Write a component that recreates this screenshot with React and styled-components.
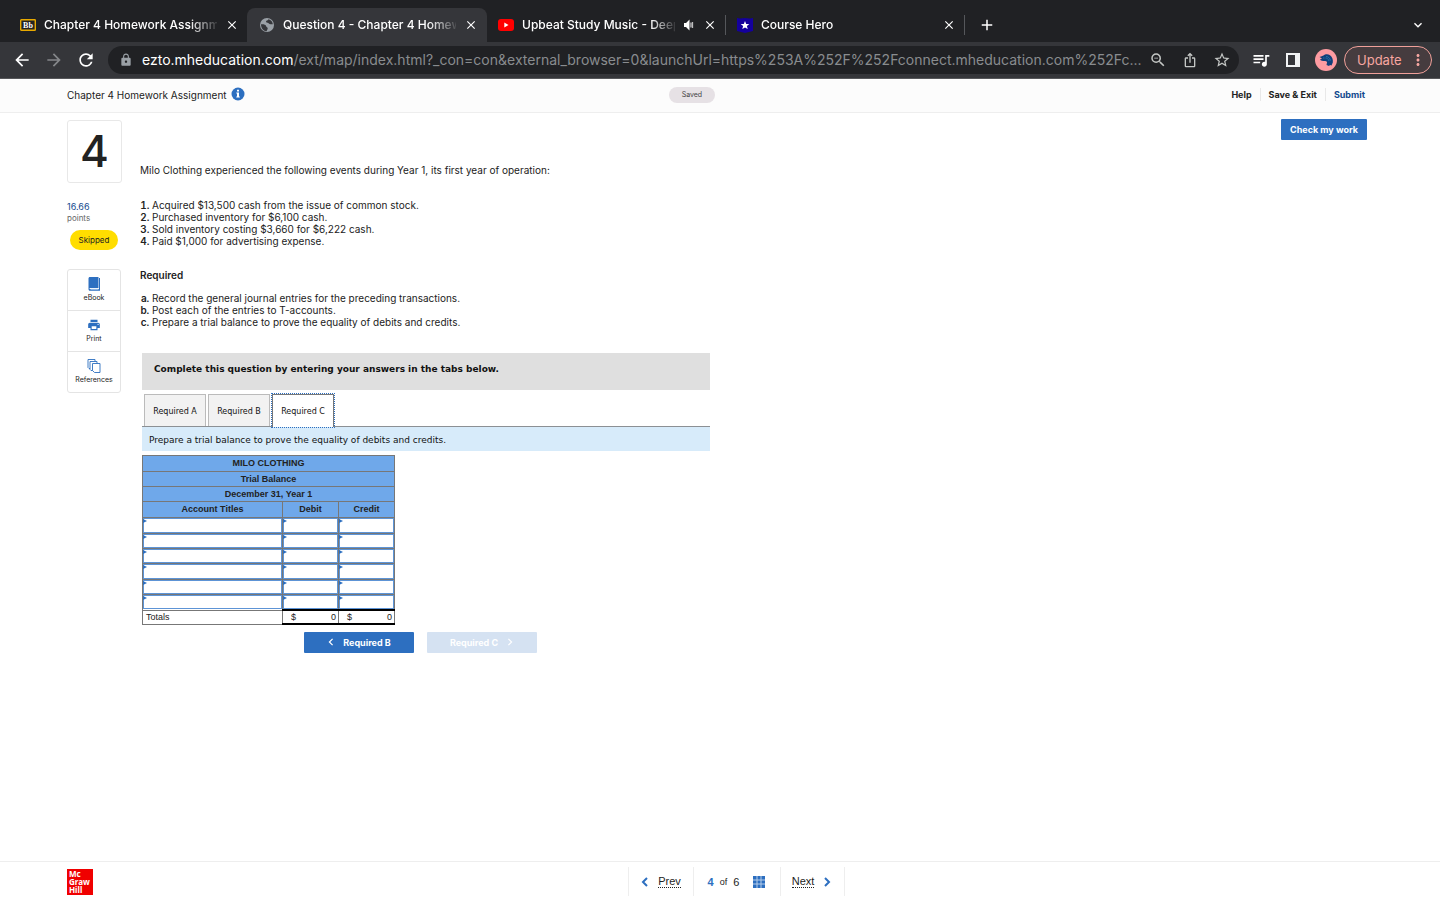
import React, { useState } from 'react'
import styled, { createGlobalStyle, css } from 'styled-components'
import { MdArrowBack, MdArrowForward, MdRefresh, MdLock, MdStarOutline, MdClose, MdAdd, MdExpandMore, MdOutlineZoomOut, MdOutlineIosShare, MdMoreVert, MdPrint, MdQueueMusic } from 'react-icons/md'

const GlobalStyle = createGlobalStyle`
  * {
    box-sizing: border-box;
  }
  body {
    margin: 0;
    background: #fff;
    color: #222;
    font-family: Inter, "Liberation Sans", sans-serif;
    font-size: 10px;
  }
  button, input {
    font: inherit;
    color: inherit;
  }
  button {
    border: 0;
    padding: 0;
    background: none;
    cursor: pointer;
  }
  a {
    color: inherit;
    text-decoration: none;
  }
`;

const Page = styled.div`
  min-height: 100vh;
  display: flex;
  flex-direction: column;
`;

/* browser chrome */
const TabStrip = styled.div`
  display: flex;
  align-items: flex-end;
  height: 42px;
  padding: 0 16px 0 8px;
  background: #202124;
  color: #fff;
`;

const BrowserTab = styled.div`
  display: flex;
  align-items: center;
  gap: 8px;
  width: 240px;
  height: 34px;
  margin-right: -1px;
  padding: 0 9px 0 12px;
  border-radius: 8px 8px 0 0;
  background: ${(p) => (p.$active ? "#35363a" : "transparent")};
`;

const TabTitle = styled.span`
  flex: 1;
  min-width: 0;
  overflow: hidden;
  white-space: nowrap;
  font-size: 12px;
  font-weight: 500;
  line-height: 18px;
  mask-image: linear-gradient(to right, #000 84%, transparent 102%);
`;

const ChromeButton = styled.button`
  display: flex;
  align-items: center;
  justify-content: center;
  flex: none;
  width: ${(p) => p.$size || 14}px;
  height: ${(p) => p.$size || 14}px;
  color: ${(p) => p.$color || "#fff"};
`;

const Divider = styled.span`
  flex: none;
  width: 1px;
  height: 20px;
  margin: 0 -1px 7px 0;
  background: #55575b;
`;

const NewTab = styled(ChromeButton)`
  margin: 0 0 8px 14px;
`;

const TabSearch = styled(ChromeButton)`
  margin: 0 -2px 9px auto;
`;

const Toolbar = styled.div`
  display: flex;
  align-items: center;
  height: 37px;
  padding: 0 8px 0 12px;
  border-bottom: 1px solid #56575a;
  background: #35363a;
`;

const NavButtons = styled.div`
  display: flex;
  gap: 12px;
  margin-right: 12px;
`;

const AddressBar = styled.div`
  display: flex;
  align-items: center;
  flex: 1;
  min-width: 0;
  height: 28px;
  padding: 0 8px 0 11px;
  border-radius: 14px;
  background: #202124;
  color: #9aa0a6;
`;

const Url = styled.span`
  flex: 1;
  min-width: 0;
  margin: 0 6px 0 9px;
  overflow: hidden;
  text-overflow: ellipsis;
  white-space: nowrap;
  font-size: 14px;
  line-height: 20px;
  color: #898c8f;
  b {
    font-weight: 400;
    color: #fff;
  }
`;

const BarIcons = styled.div`
  display: flex;
  align-items: center;
  gap: ${(p) => p.$gap}px;
`;

const Extensions = styled(BarIcons)`
  margin: 0 7px 0 12px;
`;

const UpdateButton = styled.button`
  display: flex;
  align-items: center;
  justify-content: space-between;
  width: 88px;
  height: 28px;
  padding: 0 4px 0 12px;
  border: 1px solid #f0a09a;
  border-radius: 14px;
  background: #463c3f;
  color: #f7a6a1;
  font-size: 13px;
`;

/* assignment header */
const Header = styled.header`
  display: grid;
  grid-template-columns: 12fr auto 13fr;
  align-items: center;
  height: 34px;
  padding: 0 73px 2px 67px;
  border-bottom: 1px solid #eee;
  background: #fcfcfc;
`;

const Title = styled.h1`
  display: flex;
  align-items: center;
  gap: 4px;
  margin: 0;
  font-size: 10px;
  font-weight: 400;
  line-height: 14px;
  svg {
    margin-bottom: 1px;
  }
`;

const Saved = styled.span`
  width: 46px;
  border-radius: 8px;
  background: #e6e1e5;
  color: #444;
  font-size: 7px;
  line-height: 16px;
  text-align: center;
`;

const HeaderLinks = styled.nav`
  display: flex;
  justify-content: flex-end;
  padding-right: 2px;
  font-size: 9px;
  font-weight: 700;
  line-height: 13px;
  a + a {
    margin-left: 8px;
    padding-left: 8px;
    border-left: 1px solid #e8e8e8;
  }
  a:last-child {
    color: #134a8e;
  }
`;

const Main = styled.main`
  display: flex;
  align-items: flex-start;
  flex: 1;
  padding: 6px 73px 24px 67px;
`;

const Side = styled.aside`
  flex: none;
  width: 55px;
  margin: 1px 18px 0 0;
`;

const QuestionNumber = styled.div`
  height: 63px;
  border: 1px solid #e8e8e8;
  border-radius: 3px;
  font-size: 44px;
  font-weight: 500;
  line-height: 61px;
  text-align: center;
`;

const Points = styled.div`
  margin: 18px 0 6px;
  color: #666;
  font-size: 8px;
  line-height: 11px;
  strong {
    display: block;
    color: #134a8e;
    font-size: 9px;
    font-weight: 400;
    line-height: 12px;
  }
`;

const Skipped = styled.div`
  width: 48px;
  margin: 0 auto 19px 3px;
  border-radius: 10px;
  background: #ffdd00;
  font-size: 8px;
  line-height: 20px;
  text-align: center;
`;

const Tools = styled.div`
  width: 54px;
  border: 1px solid #e4e4e4;
  border-radius: 3px;
`;

const Tool = styled.button`
  display: flex;
  flex-direction: column;
  align-items: center;
  gap: 1px;
  width: 100%;
  height: 41px;
  padding-top: 7px;
  font-size: 7px;
  line-height: 11px;
  svg {
    color: #2d6fc0;
  }
  &:first-child {
    height: 40px;
  }
  & + & {
    border-top: 1px solid #e4e4e4;
  }
`;

const Question = styled.section`
  flex: 1;
  min-width: 0;
  padding-top: 44px;
`;

const Text = styled.p`
  margin: 0;
  font-weight: ${(p) => (p.$bold ? 600 : 400)};
  line-height: 14px;
`;

const Steps = styled.ol`
  margin: ${(p) => p.$margin};
  padding-left: 12px;
  list-style: ${(p) => p.$kind};
  line-height: 12px;
  li::marker {
    font-weight: 600;
  }
`;

const Worksheet = styled.div`
  max-width: 568px;
  margin-left: 2px;
  color: #111;
  font-family: "DejaVu Sans", sans-serif;
  font-size: 9px;
`;

const Banner = styled.div`
  height: 37px;
  padding: 9px 12px;
  background: #dfdfdf;
  font-weight: 700;
  line-height: 14px;
`;

const TabList = styled.div`
  display: flex;
  gap: 2px;
  height: 37px;
  padding: 4px 2px 0;
  border-bottom: 1px solid #8c9094;
`;

const SheetTab = styled.button`
  width: 62px;
  padding-top: 2px;
  border: 1px solid #bbb;
  border-bottom: 0;
  background: #f2f2f2;
  font-size: 8px;
  ${(p) => p.$active && css`
    height: 33px;
    padding-top: 1px;
    border-color: #777;
    background: #fff;
    outline: 1px dotted #2d6fc0;
  `}
`;

const Prompt = styled.div`
  padding: 6px 7px 4px;
  background: #d7ebfa;
  line-height: 14px;
`;

const Sheet = styled.table`
  width: 253px;
  margin-top: 4px;
  border-collapse: collapse;
  table-layout: fixed;
  color: #222;
  font-family: "Liberation Sans", Arial, sans-serif;
  font-size: 9px;
  line-height: 12px;
  th, td {
    height: 15px;
    padding: 0;
    border: 1px solid #777;
  }
  tr:nth-child(3n + 1) > * {
    height: 16px;
  }
  tr:nth-child(3n + 1) input {
    height: 15px;
  }
  th {
    padding-bottom: 1px;
    background: #6fa8ea;
  }
  tr:last-child > td {
    height: 14px;
    line-height: 11px;
  }
`;

const InputCell = styled.td`
  position: relative;
  &::before {
    content: "";
    position: absolute;
    top: 1px;
    left: 0;
    border: 2px solid transparent;
    border-left: 4px solid #2d6fc0;
    border-right: 0;
  }
`;

const CellInput = styled.input`
  display: block;
  width: 100%;
  height: 14px;
  padding: 0 4px;
  border: 1px solid #5d94d6;
  border-radius: 0;
  background: #fff;
  outline: 0;
`;

const TotalLabel = styled.td`
  && {
    padding-left: 3px;
  }
`;

const Total = styled.td`
  && {
    border-top: 2px solid #000;
    border-bottom: 2px solid #000;
  }
  div {
    display: flex;
    justify-content: space-between;
    padding: 0 2px 0 8px;
  }
`;

const StepButtons = styled.div`
  display: flex;
  gap: 13px;
  margin: 7px 0 0 162px;
`;

const Button = styled.button`
  display: flex;
  align-items: center;
  justify-content: center;
  gap: 8px;
  width: ${(p) => p.$width}px;
  height: 21px;
  padding-bottom: 1px;
  border-radius: 1px;
  background: #2d6fc0;
  color: #fff;
  font-family: Inter, sans-serif;
  font-size: 9px;
  font-weight: 700;
  &:disabled {
    background: #d5e2f2;
    cursor: default;
  }
`;

/* pager */
const Footer = styled.footer`
  display: flex;
  align-items: center;
  height: 39px;
  padding: 0 60px 0 67px;
  border-top: 1px solid #eee;
`;

const Logo = styled.div`
  flex: none;
  display: flex;
  flex-direction: column;
  width: 26px;
  height: 26px;
  margin-top: 1px;
  padding: 1px 2px;
  background: #f00000;
  color: #fff;
  font-family: "Noto Sans", sans-serif;
  font-size: 8px;
  font-weight: 700;
  line-height: 8px;
`;

const Pager = styled.nav`
  display: flex;
  align-items: stretch;
  height: 29px;
  margin: 0 auto;
  border-right: 1px solid #eee;
  font-family: "Liberation Sans", Arial, sans-serif;
  font-size: 11px;
`;

const PagerItem = styled.div`
  display: flex;
  align-items: center;
  justify-content: center;
  gap: ${(p) => p.$gap}px;
  width: ${(p) => p.$width}px;
  padding: 1px 1px 0 0;
  border-left: 1px solid #eee;
  b {
    color: #2d6fc0;
  }
  small {
    font-size: 9px;
  }
  & > svg {
    margin-left: 8px;
  }
`;

const PagerLink = styled.a`
  display: flex;
  align-items: center;
  gap: 8px;
  span {
    line-height: 12px;
    border-bottom: 1px dotted #222;
  }
`;

const BlackboardIcon = () => (
  <svg width="16" height="12" viewBox="0 0 16 12">
    <rect x=".7" y=".7" width="14.6" height="10.6" rx=".6" fill="#222" stroke="#e8a900" strokeWidth="1.4" />
    <text x="8" y="9" fill="#fff" fontFamily="Liberation Serif, serif" fontWeight="700" fontSize="8" textAnchor="middle">Bb</text>
  </svg>
);

const GlobeIcon = () => (
  <svg width="16" height="16" viewBox="0 0 16 16">
    <circle cx="8" cy="8" r="7" fill="#9aa0a6" />
    <path d="M2 7.2c2.5-.2 4.8.3 5.2 2 .2 1.2 1.6.9 1.5 2.2 0 1-.9 1.7-1 2.8C4.400 14 2 11.300 2 7.200ZM9.500 2.200c-.4 1.300-2.300 1-2.500 2.200-.1 1.200 1.500.9 2.300 1.600.8.900 2 1.600 4.500 1.300C13.600 4.700 12 2.800 9.500 2.200Z" fill="#35363a" />
  </svg>
);

const YoutubeIcon = () => (
  <svg width="16" height="12" viewBox="0 0 16 12">
    <rect width="16" height="12" rx="3" fill="#f00" />
    <path d="M6.300 3.500v5l4.200-2.500Z" fill="#fff" />
  </svg>
);

const HeroIcon = () => (
  <svg width="16" height="16" viewBox="0 0 16 16">
    <path d="M0 1c2 .7 4 .5 8 0 4 .5 6 .7 8 0v13l-8 2-8-2Z" fill="#14009c" />
    <path d="m8 4 1.200 2.900 3.100.2-2.400 2 .8 3L8 10.500l-2.700 1.600.8-3-2.400-2 3.100-.2Z" fill="#fff" />
  </svg>
);

const SpeakerIcon = () => (
  <svg width="12" height="12" viewBox="0 0 12 12" fill="#fff">
    <path d="M1 4h2l3.500-3.500v11L3 8H1Z" />
    <path d="M7.500 3.500h1v5h-1zM9.300 3h.8v6h-.8z" />
  </svg>
);

const SidePanelIcon = () => (
  <svg width="14" height="14" viewBox="0 0 14 14">
    <path d="M0 0h14v14H0ZM2 2v10h7V2Z" fill="#f1f3f4" fillRule="evenodd" />
  </svg>
);

const AvatarIcon = () => (
  <svg width="22" height="22" viewBox="0 0 22 22">
    <circle cx="11" cy="11" r="11" fill="#fd9ba1" />
    <path d="M4.500 8 6 7.500 8.500 6.500C10 5 13 4.800 15 6.200c2 1.400 3.300 4 2.800 7.300l-1.300 3-1.500-.5-1 1-2.500-1 .3-1.500c1-1.500-.5-2.700-2-2.500C8 12 5.500 12 5 10.500L7 9.500Z" fill="#113f79" />
    <path d="M10.500 9c1.500 0 3 1 3.500 3M11 7.500c2 0 4 1.500 4.500 4M8 9h1.500" fill="none" stroke="#287cb4" strokeWidth=".8" />
  </svg>
);

const InfoIcon = () => (
  <svg width="14" height="14" viewBox="0 0 14 14">
    <circle cx="7" cy="7" r="6.500" fill="#2d6fc0" />
    <path d="M6 2.800h2v1.700H6ZM5.300 5.600H8v4h.8v1H5.300v-1H6v-3h-.7Z" fill="#fff" />
  </svg>
);

const BookIcon = () => (
  <svg width="13" height="14" viewBox="0 0 13 14">
    <path d="M2 0h8.500v11H2c-.8 0-.8 1 0 1h9V1h1v12.800H2.200C1 13.800.5 13 .5 12V1.500C.5.600 1 0 2 0Z" fill="#2d6fc0" />
    <path d="M2.500 12.300h8" stroke="#a9c7ea" />
  </svg>
);

const CopiesIcon = () => (
  <svg width="14" height="14" viewBox="0 0 14 14" fill="#fff" stroke="#2d6fc0" strokeWidth=".9">
    <path d="M1 .500h7v9H2L1 8.500Z" />
    <path d="M3 2.500h7v9H4L3 10.500Z" />
    <path d="M5.500 4.500H13v9H7.500L5.500 11.500Z" />
  </svg>
);

const Chevron = ({ right, size = 10, width = 2, color = "currentColor" }) => (
  <svg width={size} height={size} viewBox="0 0 10 10" fill="none" stroke={color} strokeWidth={width}>
    <path d={right ? "m3 1 4 4-4 4" : "M7 1 3 5l4 4"} />
  </svg>
);

const GridIcon = () => (
  <svg width="12" height="12" viewBox="0 0 12 12">
    <path d="M0 0h12v12H0Z" fill="#2d6fc0" />
    <path d="M4 0v12M8 0v12M0 4h12M0 8h12" stroke="#b5cdea" />
  </svg>
);

const browserTabs = [
  { title: "Chapter 4 Homework Assignment", icon: <BlackboardIcon /> },
  { title: "Question 4 - Chapter 4 Homework", icon: <GlobeIcon />, active: true },
  { title: "Upbeat Study Music - Deep Focus", icon: <YoutubeIcon />, audio: true, divider: true },
  { title: "Course Hero", icon: <HeroIcon />, divider: true },
];

const sheetTabs = ["Required A", "Required B", "Required C"];
const columns = ["Account title", "Debit", "Credit"];
const rows = [1, 2, 3, 4, 5, 6];

const Browser = () => (
  <div>
    <TabStrip>
      {browserTabs.map((tab) => (
        <React.Fragment key={tab.title}>
          <BrowserTab $active={tab.active}>
            {tab.icon}
            <TabTitle>{tab.title}</TabTitle>
            {tab.audio && <SpeakerIcon />}
            <ChromeButton aria-label="Close tab"><MdClose size={14} /></ChromeButton>
          </BrowserTab>
          {tab.divider && <Divider />}
        </React.Fragment>
      ))}
      <NewTab $size={18} aria-label="New tab"><MdAdd size={18} /></NewTab>
      <TabSearch $size={16} aria-label="Search tabs"><MdExpandMore size={18} /></TabSearch>
    </TabStrip>
    <Toolbar>
      <NavButtons>
        <ChromeButton $size={20} aria-label="Back"><MdArrowBack size={20} /></ChromeButton>
        <ChromeButton $size={20} $color="#85878a" aria-label="Forward"><MdArrowForward size={20} /></ChromeButton>
        <ChromeButton $size={20} aria-label="Reload"><MdRefresh size={20} /></ChromeButton>
      </NavButtons>
      <AddressBar>
        <MdLock size={14} />
        <Url><b>ezto.mheducation.com</b>/ext/map/index.html?_con=con&amp;external_browser=0&amp;launchUrl=https%253A%252F%252Fconnect.mheducation.com%252Fc...</Url>
        <BarIcons $gap={14}>
          <ChromeButton $size={18} $color="#c4c7c5" aria-label="Zoom"><MdOutlineZoomOut size={18} /></ChromeButton>
          <ChromeButton $size={18} $color="#c4c7c5" aria-label="Share"><MdOutlineIosShare size={16} /></ChromeButton>
          <ChromeButton $size={18} $color="#c4c7c5" aria-label="Bookmark"><MdStarOutline size={18} /></ChromeButton>
        </BarIcons>
      </AddressBar>
      <Extensions $gap={12}>
        <ChromeButton $size={20} aria-label="Media"><MdQueueMusic size={22} /></ChromeButton>
        <ChromeButton $size={20} aria-label="Side panel"><SidePanelIcon /></ChromeButton>
        <ChromeButton $size={22} aria-label="Profile"><AvatarIcon /></ChromeButton>
      </Extensions>
      <UpdateButton>Update <MdMoreVert size={18} /></UpdateButton>
    </Toolbar>
  </div>
);

const TrialBalance = () => (
  <Sheet>
    <colgroup>
      <col width="140" />
      <col width="56" />
      <col width="56" />
    </colgroup>
    <thead>
      <tr><th colSpan={3}>MILO CLOTHING</th></tr>
      <tr><th colSpan={3}>Trial Balance</th></tr>
      <tr><th colSpan={3}>December 31, Year 1</th></tr>
      <tr><th>Account Titles</th><th>Debit</th><th>Credit</th></tr>
    </thead>
    <tbody>
      {rows.map((row) => (
        <tr key={row}>
          {columns.map((column) => (
            <InputCell key={column}><CellInput aria-label={`${column} ${row}`} /></InputCell>
          ))}
        </tr>
      ))}
      <tr>
        <TotalLabel>Totals</TotalLabel>
        <Total><div><span>$</span><span>0</span></div></Total>
        <Total><div><span>$</span><span>0</span></div></Total>
      </tr>
    </tbody>
  </Sheet>
);

const App = () => {
  const [activeTab, setActiveTab] = useState("Required C");

  return (
    <Page>
      <GlobalStyle />
      <Browser />
      <Header>
        <Title>Chapter 4 Homework Assignment <InfoIcon /></Title>
        <Saved>Saved</Saved>
        <HeaderLinks>
          <a href="#help">Help</a>
          <a href="#exit">Save &amp; Exit</a>
          <a href="#submit">Submit</a>
        </HeaderLinks>
      </Header>
      <Main>
        <Side>
          <QuestionNumber>4</QuestionNumber>
          <Points><strong>16.66</strong>points</Points>
          <Skipped>Skipped</Skipped>
          <Tools>
            <Tool><BookIcon />eBook</Tool>
            <Tool><MdPrint size={14} />Print</Tool>
            <Tool><CopiesIcon />References</Tool>
          </Tools>
        </Side>
        <Question>
          <Text>Milo Clothing experienced the following events during Year 1, its first year of operation:</Text>
          <Steps $kind="decimal" $margin="22px 0 21px">
            <li>Acquired $13,500 cash from the issue of common stock.</li>
            <li>Purchased inventory for $6,100 cash.</li>
            <li>Sold inventory costing $3,660 for $6,222 cash.</li>
            <li>Paid $1,000 for advertising expense.</li>
          </Steps>
          <Text $bold>Required</Text>
          <Steps $kind="lower-alpha" $margin="10px 0 25px">
            <li>Record the general journal entries for the preceding transactions.</li>
            <li>Post each of the entries to T-accounts.</li>
            <li>Prepare a trial balance to prove the equality of debits and credits.</li>
          </Steps>
          <Worksheet>
            <Banner>Complete this question by entering your answers in the tabs below.</Banner>
            <TabList role="tablist">
              {sheetTabs.map((name) => (
                <SheetTab key={name} role="tab" aria-selected={name === activeTab} $active={name === activeTab} onClick={() => setActiveTab(name)}>
                  {name}
                </SheetTab>
              ))}
            </TabList>
            <Prompt>Prepare a trial balance to prove the equality of debits and credits.</Prompt>
            <TrialBalance />
            <StepButtons>
              <Button $width={110}><Chevron size={8} width={1.500} />Required B</Button>
              <Button $width={110} disabled>Required C<Chevron right size={8} width={1.500} /></Button>
            </StepButtons>
          </Worksheet>
        </Question>
        <Button $width={86}>Check my work</Button>
      </Main>
      <Footer>
        <Logo><span>Mc</span><span>Graw</span><span>Hill</span></Logo>
        <Pager>
          <PagerItem $width={65}>
            <PagerLink href="#prev"><Chevron color="#2d6fc0" /><span>Prev</span></PagerLink>
          </PagerItem>
          <PagerItem $width={87} $gap={6}>
            <b>4</b><small>of</small><span>6</span>
            <GridIcon />
          </PagerItem>
          <PagerItem $width={64}>
            <PagerLink href="#next"><span>Next</span><Chevron right color="#2d6fc0" /></PagerLink>
          </PagerItem>
        </Pager>
      </Footer>
    </Page>
  );
};

export default App;
